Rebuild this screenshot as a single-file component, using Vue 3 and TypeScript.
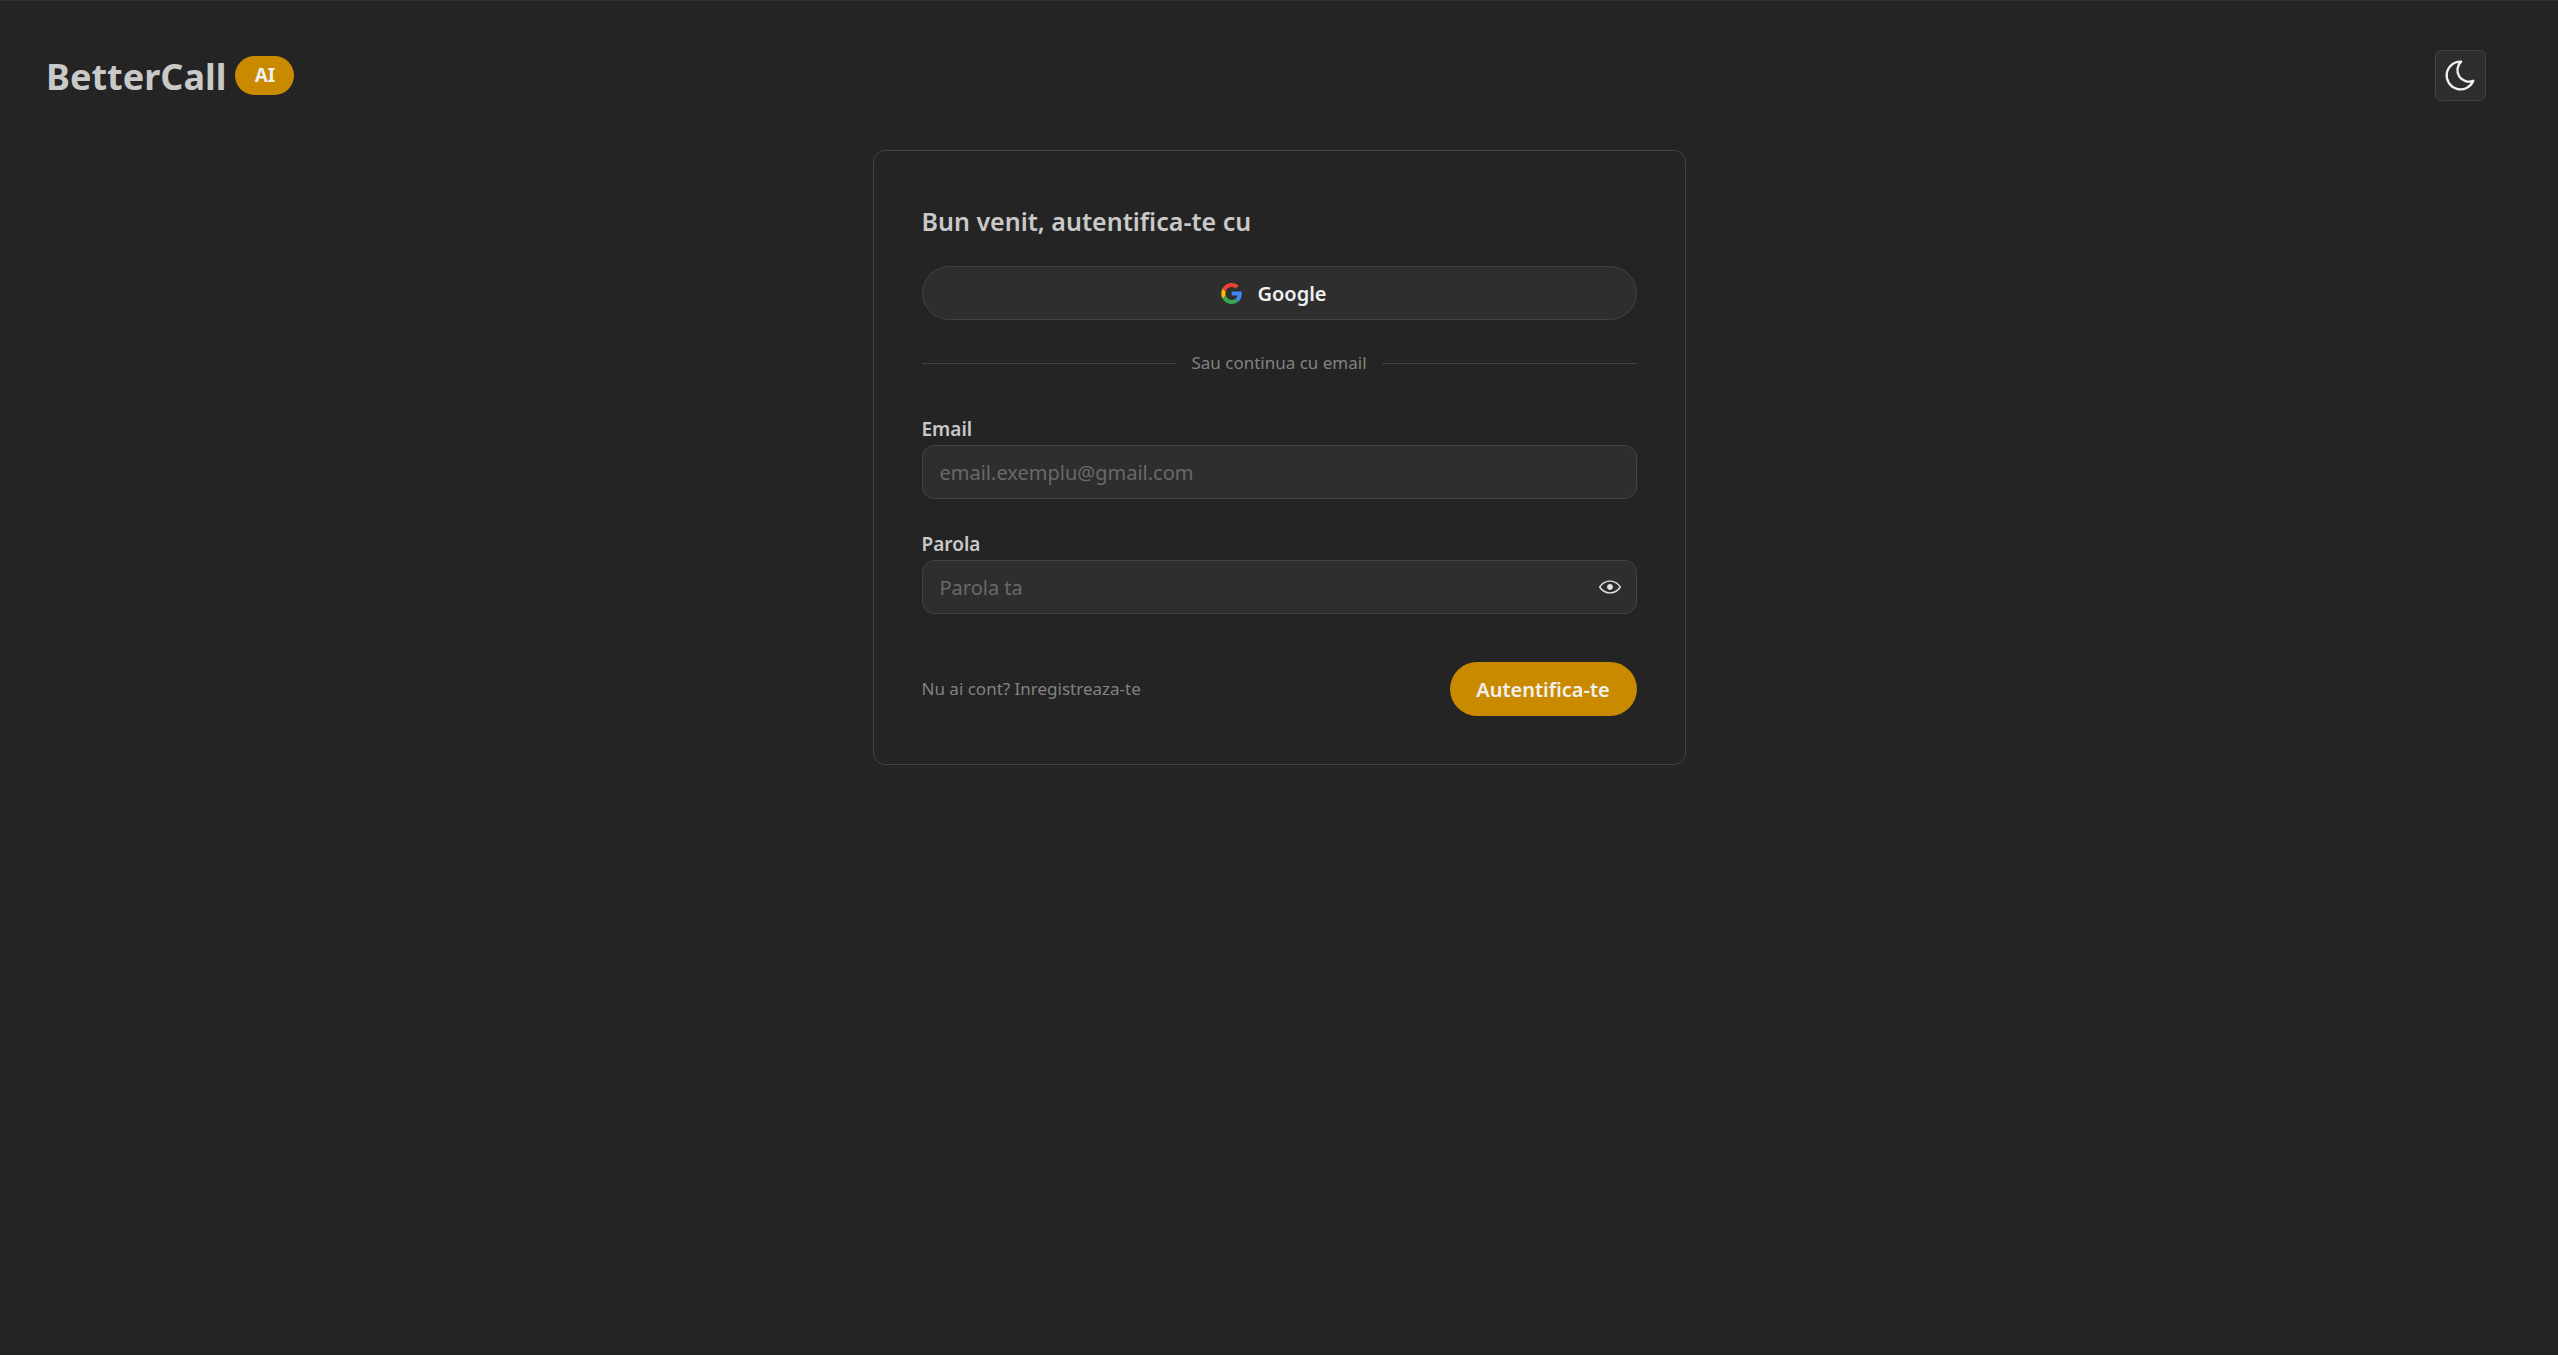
<script setup lang="ts">
import { ref } from 'vue'

const email = ref('')
const password = ref('')
const showPassword = ref(false)
</script>

<template>
  <div class="page">
    <header class="header">
      <div class="brand">
        <span class="brand-name">BetterCall</span>
        <span class="badge">AI</span>
      </div>
      <button class="theme-toggle" type="button" aria-label="Schimba tema">
        <svg viewBox="0 0 24 24" width="37" height="37" fill="none" stroke="currentColor" stroke-width="1.5" stroke-linecap="round" stroke-linejoin="round">
          <path d="M12 3c.132 0 .263 0 .393 0a7.5 7.5 0 0 0 7.92 12.446a9 9 0 1 1 -8.313 -12.454z" />
        </svg>
      </button>
    </header>

    <main class="main">
      <section class="card">
        <h1 class="title">Bun venit, autentifica-te cu</h1>

        <button class="google" type="button">
          <svg viewBox="0 0 256 262" width="21" height="21">
            <path fill="#4285F4" d="M255.878 133.451c0-10.734-.871-18.567-2.756-26.69H130.55v48.448h71.947c-1.45 12.04-9.283 30.172-26.69 42.356l-.244 1.622 38.755 30.023 2.685.268c24.659-22.774 38.875-56.282 38.875-96.027" />
            <path fill="#34A853" d="M130.55 261.1c35.248 0 64.839-11.605 86.453-31.622l-41.196-31.913c-11.024 7.688-25.82 13.055-45.257 13.055-34.523 0-63.824-22.773-74.269-54.25l-1.531.13-40.298 31.187-.527 1.465C35.393 231.798 79.49 261.1 130.55 261.1" />
            <path fill="#FBBC05" d="M56.281 156.37c-2.756-8.123-4.351-16.827-4.351-25.82 0-8.994 1.595-17.697 4.206-25.82l-.073-1.73L15.26 71.312l-1.335.635C5.077 89.644 0 109.517 0 130.55s5.077 40.905 13.925 58.602l42.356-32.782" />
            <path fill="#EB4335" d="M130.55 50.479c24.514 0 41.05 10.589 50.479 19.438l36.844-35.974C195.245 12.91 165.798 0 130.55 0 79.49 0 35.393 29.301 13.925 71.947l42.211 32.783c10.59-31.477 39.891-54.251 74.414-54.251" />
          </svg>
          <span>Google</span>
        </button>

        <div class="divider">Sau continua cu email</div>

        <form class="form" @submit.prevent>
          <div class="field">
            <label for="email">Email</label>
            <div class="control">
              <input id="email" v-model="email" type="email" placeholder="email.exemplu@gmail.com" />
            </div>
          </div>

          <div class="field">
            <label for="password">Parola</label>
            <div class="control">
              <input id="password" v-model="password" :type="showPassword ? 'text' : 'password'" placeholder="Parola ta" />
              <button class="reveal" type="button" aria-label="Arata parola" @click="showPassword = !showPassword">
                <svg viewBox="0 0 15 15" width="22" height="22">
                  <path fill="currentColor" fill-rule="evenodd" clip-rule="evenodd" d="M7.5 11C4.80285 11 2.52952 9.62184 1.09622 7.50001C2.52952 5.37816 4.80285 4 7.5 4C10.1971 4 12.4705 5.37816 13.9038 7.50001C12.4705 9.62183 10.1971 11 7.5 11ZM7.5 3C4.30786 3 1.65639 4.70638 0.0760002 7.23501C-0.0253338 7.39715 -0.0253334 7.60288 0.0760014 7.76501C1.65639 10.2936 4.30786 12 7.5 12C10.6921 12 13.3436 10.2936 14.924 7.76501C15.0253 7.60288 15.0253 7.39715 14.924 7.23501C13.3436 4.70638 10.6921 3 7.5 3ZM7.5 9.5C8.60457 9.5 9.5 8.60457 9.5 7.5C9.5 6.39543 8.60457 5.5 7.5 5.5C6.39543 5.5 5.5 6.39543 5.5 7.5C5.5 8.60457 6.39543 9.5 7.5 9.5Z" />
                </svg>
              </button>
            </div>
          </div>

          <div class="actions">
            <a class="register" href="#">Nu ai cont? Inregistreaza-te</a>
            <button class="submit" type="submit">Autentifica-te</button>
          </div>
        </form>
      </section>
    </main>
  </div>
</template>

<style>
body {
  background: #242424;
}
</style>

<style scoped>
.page {
  box-sizing: border-box;
  min-height: 100vh;
  border-top: 1px solid #2f2e33;
  border-bottom: 1px solid #271f23;
  background: #242424;
  color: #c9c9c9;
  font-family: "Segoe UI", "Noto Sans", sans-serif;
}

svg {
  display: block;
  flex: none;
}

button {
  margin: 0;
  font-family: inherit;
  cursor: pointer;
}

.header {
  display: flex;
  align-items: center;
  justify-content: space-between;
  padding: 49px 72px 49px 46px;
}

.brand {
  display: flex;
  align-items: flex-end;
  gap: 9px;
}

.brand-name {
  font-size: 36px;
  font-weight: 700;
  line-height: 36px;
}

.badge {
  min-width: 59px;
  border-radius: 20px;
  background: #c98a00;
  color: #f0f0f0;
  font-size: 19px;
  font-weight: 700;
  line-height: 39px;
  text-align: center;
}

.theme-toggle {
  display: grid;
  place-items: center;
  width: 51px;
  height: 51px;
  padding: 0;
  border: 1px solid #424242;
  border-radius: 6px;
  background: #2e2e2e;
  color: #f0f0f0;
}

.main {
  display: flex;
  justify-content: center;
}

.card {
  box-sizing: border-box;
  width: 100%;
  max-width: 813px;
  padding: 48px;
  border: 1px solid #424242;
  border-radius: 12px;
}

.title {
  margin: 0 0 23px;
  font-size: 25px;
  font-weight: 600;
  line-height: 44px;
}

.google {
  display: flex;
  align-items: center;
  justify-content: center;
  gap: 15px;
  width: 100%;
  height: 54px;
  padding: 0 36px 0 26px;
  border: 1px solid #424242;
  border-radius: 27px;
  background: #2e2e2e;
  color: #f0f0f0;
  font-size: 20px;
  font-weight: 600;
}

.divider {
  display: flex;
  align-items: center;
  gap: 15px;
  margin: 31px 0 38px;
  color: #828282;
  font-size: 17px;
  line-height: 24px;
}

.divider::before,
.divider::after {
  content: "";
  flex: 1;
  height: 1px;
  background: #424242;
}

.form {
  display: flex;
  flex-direction: column;
  gap: 29px;
}

.field label {
  display: block;
  font-size: 19px;
  font-weight: 600;
  line-height: 32px;
}

.control {
  box-sizing: border-box;
  display: flex;
  align-items: center;
  height: 54px;
  padding: 0 15px 0 17px;
  border: 1px solid #424242;
  border-radius: 12px;
  background: #2e2e2e;
}

.control input {
  flex: 1;
  min-width: 0;
  height: 100%;
  padding: 0;
  border: 0;
  outline: 0;
  background: transparent;
  color: #c9c9c9;
  font-family: inherit;
  font-size: 20px;
}

.control input::placeholder {
  color: #696969;
  opacity: 1;
}

.reveal {
  padding: 0;
  border: 0;
  background: transparent;
  color: #dee2e6;
}

.actions {
  display: flex;
  align-items: center;
  justify-content: space-between;
  margin-top: 19px;
}

.register {
  color: #828282;
  font-size: 17px;
  line-height: 24px;
  text-decoration: none;
}

.submit {
  min-width: 187px;
  height: 54px;
  padding: 0 24px;
  border: 0;
  border-radius: 27px;
  background: #c98a00;
  color: #f0f0f0;
  font-size: 20px;
  font-weight: 600;
}
</style>
